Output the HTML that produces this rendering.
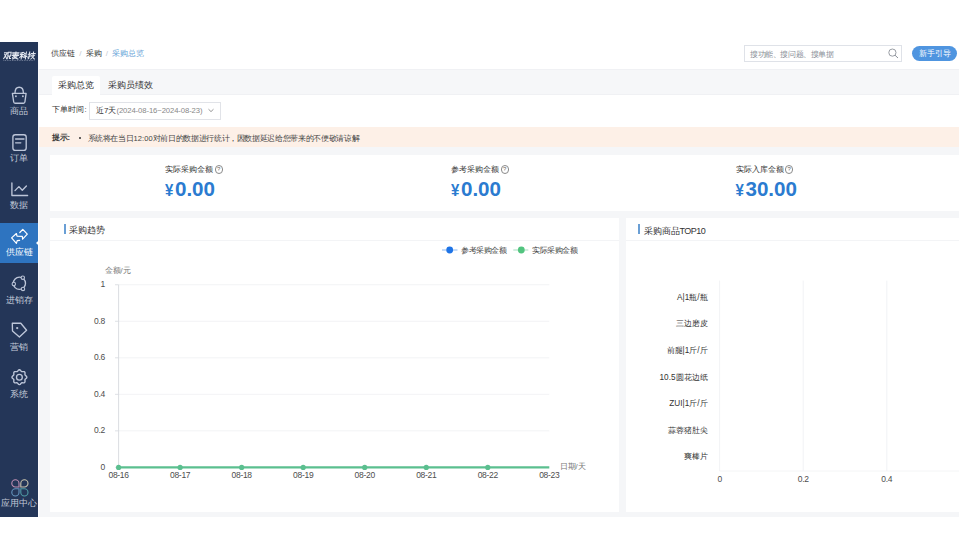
<!DOCTYPE html>
<html><head><meta charset="utf-8">
<style>
*{box-sizing:border-box;margin:0;padding:0}
html,body{width:959px;height:559px;overflow:hidden;background:#fff;font-family:"Liberation Sans",sans-serif;color:#333}
.a{position:absolute;white-space:nowrap}
.app{position:absolute;left:0;top:42px;width:959px;height:475px;background:#f5f6f8}
.side{position:absolute;left:0;top:42px;width:38px;height:475px;background:#243658}
.sl{position:absolute;left:0;width:38px;text-align:center;font-size:9px;line-height:10px;color:#c3cad8;white-space:nowrap}
.act{position:absolute;left:0;top:223px;width:38px;height:40px;background:#2e74c0}
.white{background:#fff}
.bc{font-size:8px;line-height:10px;color:#333}
.bc .sep{color:#c4c8cf;margin:0 4.2px}
.bc .cur{color:#62a0d6}
.tabt{font-size:9px;line-height:10px;color:#333}
.lbl{font-size:7.7px;line-height:9px;color:#333}
.q{position:absolute;width:8.2px;height:8.2px;border:0.7px solid #8a8a8a;border-radius:50%;font-size:6px;line-height:7px;text-align:center;color:#666}
.val{color:#2b7bd0;font-weight:bold;font-size:20.6px;line-height:20px;margin-top:0.5px}
.val small{font-size:15px;margin-right:1.6px;display:inline-block;transform:scaleY(1.13);transform-origin:50% 80%}
.ttl{font-size:9px;line-height:10px;color:#333}
.bar{position:absolute;width:2.4px;background:#6a9fd5}
.ax{font-size:8.5px;line-height:9px;color:#4d4d4d;letter-spacing:-0.3px}
.yl{font-size:8.2px;line-height:9px;color:#333;text-align:right}
.c{font-size:1.333em;line-height:0;position:relative;top:var(--cy,0.15em);-webkit-text-stroke:0.15px currentColor}
html.cjk .c{font-size:1em;line-height:inherit;top:0;letter-spacing:var(--ls2);-webkit-text-stroke:0}
</style></head><body>
<div class="app"></div>
<!-- sidebar -->
<div class="side"></div>
<div class="a" style="left:38px;top:42px;width:1px;height:475px;background:#fbfbfd"></div>
<div class="act"></div>
<svg class="a" style="left:0;top:0" width="40" height="70" viewBox="0 0 40 70"><g transform="translate(0,55.5) skewX(-9) translate(0,-55.5)"><g transform="translate(0,52.1) scale(1,0.98) translate(0,-52.1)" fill="none" stroke="#e4e8f0" stroke-width="1.05" stroke-linecap="square"><path transform="translate(3.9,52.1)" d="M0.2,0.6 H3 L0.3,6.6 M0.6,2.2 L3.2,6.6 M3.9,0.2 H6.8 V4 H3.9 Z M4.6,4 L3.7,7 M6,4 V6.6 H7.1"/><path transform="translate(11.9,52.1)" d="M0.4,0.8 H6.6 M0.9,2.1 H6.1 M0.3,3.4 H6.7 M3.5,0 V3.4 M2.6,3.9 L0.9,5.9 M2,4.8 H5.6 L1.4,7 M3,5.6 L6.6,7"/><path transform="translate(19.9,52.1)" d="M0.4,1 L3,0.3 M0.2,2.5 H3.2 M1.8,0.5 V7 M1.8,3 L0.2,5.6 M1.8,3.2 L3,4.6 M4,1 L4.9,1.7 M4,2.9 L4.9,3.6 M3.5,5.1 L7,4.4 M6,0 V7"/><path transform="translate(27.9,52.1)" d="M0.2,2.2 H2.5 M1.3,0 V6.5 L0.7,6.9 M0.2,5.1 L2.5,3.9 M3.2,1.5 H7 M5.1,0 V3 M3.6,3.3 H6.5 L3.5,7 M4.2,4.5 L7,7"/></g></g><path d="M3.5,60.5 H34.5" stroke="#8e98ae" stroke-width="0.8" stroke-dasharray="0.8 0.9"/></svg>
<div class="sl" style="top:106px"><span class="c">商品</span></div>
<div class="sl" style="top:153px"><span class="c">订单</span></div>
<div class="sl" style="top:200px"><span class="c">数据</span></div>
<div class="sl" style="top:247px;color:#fff"><span class="c">供应链</span></div>
<div class="sl" style="top:295px"><span class="c">进销存</span></div>
<div class="sl" style="top:342px"><span class="c">营销</span></div>
<div class="sl" style="top:389px"><span class="c">系统</span></div>
<div class="sl" style="top:498px"><span class="c">应用中心</span></div>
<svg class="a" style="left:0;top:0" width="40" height="559" viewBox="0 0 40 559">
 <g fill="none" stroke="#bdc6d9" stroke-width="1.35" stroke-linejoin="round" stroke-linecap="round">
  <path d="M15,93 Q15,87.2 19.2,87.2 Q23.4,87.2 23.4,93"/>
  <path d="M12.4,93.4 H26.1 L24.9,102 Q24.7,103.2 23.6,103.2 H15 Q13.9,103.2 13.7,102 Z"/>
  <rect x="12.9" y="134.7" width="13.3" height="15.6" rx="2.4"/>
  <path d="M15.6,139 H24 M15.6,142.8 H20.8"/>
  <path d="M11.9,183 V195.5 H27.6"/>
  <path d="M15,190.6 L18.9,186.6 L22.3,190.3 L26.4,186"/>
  <circle cx="19.4" cy="283.3" r="6.1"/>
  <path d="M12.3,323.2 H20.8 L26.6,330.2 L19.4,337 L12.5,331.1 Z"/>
  <path d="M19.40,369.75 L20.11,369.99 L20.72,370.58 L21.22,371.21 L21.72,371.61 L22.35,371.68 L23.15,371.59 L24.00,371.60 L24.67,371.93 L25.00,372.60 L25.01,373.45 L24.92,374.25 L24.99,374.88 L25.39,375.38 L26.02,375.88 L26.61,376.49 L26.85,377.20 L26.61,377.91 L26.02,378.52 L25.39,379.02 L24.99,379.52 L24.92,380.15 L25.01,380.95 L25.00,381.80 L24.67,382.47 L24.00,382.80 L23.15,382.81 L22.35,382.72 L21.72,382.79 L21.22,383.19 L20.72,383.82 L20.11,384.41 L19.40,384.65 L18.69,384.41 L18.08,383.82 L17.58,383.19 L17.08,382.79 L16.45,382.72 L15.65,382.81 L14.80,382.80 L14.13,382.47 L13.80,381.80 L13.79,380.95 L13.88,380.15 L13.81,379.52 L13.41,379.02 L12.78,378.52 L12.19,377.91 L11.95,377.20 L12.19,376.49 L12.78,375.88 L13.41,375.38 L13.81,374.88 L13.88,374.25 L13.79,373.45 L13.80,372.60 L14.13,371.93 L14.80,371.60 L15.65,371.59 L16.45,371.68 L17.08,371.61 L17.58,371.21 L18.08,370.58 L18.69,369.99Z"/>
  <circle cx="19.4" cy="377.2" r="2.9"/>
 </g>
 <g fill="#b9c2d6"><circle cx="15.9" cy="96.3" r="0.95"/><circle cx="22.9" cy="96.3" r="0.95"/><circle cx="17.2" cy="328.1" r="1.15"/></g>
 <g fill="#243658" stroke="#b9c2d6" stroke-width="1.1"><circle cx="22.8" cy="277.7" r="1.7"/><circle cx="13.8" cy="284" r="1.7"/><circle cx="23" cy="288.9" r="1.7"/></g>
 <path d="M19.8,232.5 L22.8,229.4 L27.3,234.2 L22.6,239.2 L22.3,236.3 L17,236.2 L16.4,233.5 L11.6,237.9 L16.4,243.3 L17.2,240.6 L19.6,240.3" fill="none" stroke="#fff" stroke-width="1.2" stroke-linejoin="round" stroke-linecap="round"/>
 <path d="M36,243 L38.6,240.5 V245.5 Z" fill="#fff"/>
 <g fill="none" stroke-width="1.1">
  <path d="M19,487 H15.4 A3.6,3.6 0 1 1 19,483.4 Z" stroke="#bf8fb2"/><path d="M20.8,487 V483.4 A3.6,3.6 0 1 1 24.4,487 Z" stroke="#c9c4ae"/><path d="M19,488.8 V492.4 A3.6,3.6 0 1 1 15.4,488.8 Z" stroke="#6494bd"/><path d="M20.8,488.8 H24.4 A3.6,3.6 0 1 1 20.8,492.4 Z" stroke="#4f9ba5"/>
 </g>
</svg>
<!-- header -->
<div class="a white" style="left:39px;top:42px;width:920px;height:27px"></div>
<div class="a bc" style="left:51px;top:49px"><span class="c">供应链</span><span class="sep">/</span><span class="c">采购</span><span class="sep">/</span><span class="cur"><span class="c">采购总览</span></span></div>
<div class="a" style="left:744px;top:45px;width:158px;height:17px;border:1px solid #dfe2e8;background:#fff"></div>
<div class="a" style="left:750px;top:49.8px;font-size:7.9px;letter-spacing:-0.4px;line-height:10px;color:#8a8f98"><span class="c">搜功能、搜问题、搜单据</span></div>
<svg class="a" style="left:886px;top:47px" width="14" height="13" viewBox="0 0 14 13"><circle cx="6.4" cy="5.6" r="3.6" fill="none" stroke="#8d929a" stroke-width="0.9"/><path d="M9,8.2 L12,11" stroke="#8d929a" stroke-width="1"/></svg>
<div class="a" style="left:912px;top:46px;width:45px;height:15px;border-radius:8px;background:#4f95e0;color:#fff;font-size:7.5px;line-height:15px;text-align:center"><span class="c">新手引导</span></div>
<!-- tabs -->
<div class="a" style="left:39px;top:69px;width:920px;height:26px;background:#f6f7f9;border-top:1px solid #f0f1f4;border-bottom:1.5px solid #f0f1f4"></div>
<div class="a white" style="left:52px;top:76px;width:48px;height:19px;border-radius:2px 2px 0 0"></div>
<div class="a tabt" style="left:58px;top:80px"><span class="c">采购总览</span></div>
<div class="a tabt" style="left:107.5px;top:80px"><span class="c">采购员绩效</span></div>
<!-- filter -->
<div class="a white" style="left:39px;top:95px;width:920px;height:32px"></div>
<div class="a" style="left:51.5px;top:105px;font-size:7.5px;line-height:10px;color:#333"><span class="c">下单时间</span><span style="margin-left:1px">:</span></div>
<div class="a" style="left:89px;top:102px;width:132px;height:18px;border:1px solid #e1e3e8;background:#fff"></div>
<div class="a" style="left:96px;top:106px;font-size:8px;line-height:10px;color:#333"><span class="c">近</span>7<span class="c">天</span><span style="color:#888;font-size:7.7px;letter-spacing:-0.1px">(2024-08-16~2024-08-23)</span></div>
<svg class="a" style="left:207px;top:108px" width="8" height="5" viewBox="0 0 8 5"><path d="M1.5,1.2 L4,3.6 L6.5,1.2" fill="none" stroke="#888" stroke-width="0.9"/></svg>
<!-- notice -->
<div class="a" style="left:39px;top:127px;width:920px;height:20px;background:#fdf0e7"></div>
<div class="a" style="left:51.5px;top:132.5px;font-size:7.5px;line-height:10px;color:#333;font-weight:bold;margin-top:0.8px"><span class="c">提示</span>:</div>
<div class="a" style="left:78.6px;top:137px;width:2.4px;height:2.4px;border-radius:50%;background:#333"></div>
<div class="a" style="--cy:0.05em;left:87.5px;top:134.3px;font-size:7.5px;letter-spacing:0.1px;--ls2:-0.35px;line-height:10px;color:#444"><span class="c">系统将在当日</span>12:00<span class="c">对前日的数据进行统计，因数据延迟给您带来的不便敬请谅解</span></div>
<!-- stats -->
<div class="a white" style="left:50px;top:154.5px;width:909px;height:56.5px"></div>
<div class="a lbl" style="left:165px;top:165px"><span class="c">实际采购金额</span></div>
<div class="q" style="left:214.5px;top:165.4px">?</div>
<div class="a val" style="left:165px;top:178px"><small>¥</small>0.00</div>
<div class="a lbl" style="left:451px;top:165px"><span class="c">参考采购金额</span></div>
<div class="q" style="left:500.5px;top:165.4px">?</div>
<div class="a val" style="left:451px;top:178px"><small>¥</small>0.00</div>
<div class="a lbl" style="left:735.5px;top:165px"><span class="c">实际入库金额</span></div>
<div class="q" style="left:785px;top:165.4px">?</div>
<div class="a val" style="left:735.5px;top:178px"><small>¥</small>30.00</div>
<!-- left chart card -->
<div class="a white" style="left:50px;top:217.5px;width:569px;height:294px"></div>
<div class="bar" style="left:64px;top:224.3px;height:10px"></div>
<div class="a ttl" style="left:69px;top:225px"><span class="c">采购趋势</span></div>
<div class="a" style="left:50px;top:239.5px;width:569px;height:1px;background:#f3f4f6"></div>
<!-- right chart card -->
<div class="a white" style="left:626px;top:217.5px;width:333px;height:294px"></div>
<div class="bar" style="left:638px;top:224px;height:10.3px"></div>
<div class="a ttl" style="left:643.5px;top:225.5px"><span class="c">采购商品</span><span style="letter-spacing:-0.5px">TOP10</span></div>
<div class="a" style="left:626px;top:239.5px;width:333px;height:1px;background:#f3f4f6"></div>
<svg class="a" style="left:0;top:0" width="959" height="559" viewBox="0 0 959 559">
<path d="M118.6,284.75 H549.3" stroke="#eff0f3" stroke-width="0.8" fill="none"/>
<path d="M118.6,321.28 H549.3" stroke="#eff0f3" stroke-width="0.8" fill="none"/>
<path d="M118.6,357.81 H549.3" stroke="#eff0f3" stroke-width="0.8" fill="none"/>
<path d="M118.6,394.34 H549.3" stroke="#eff0f3" stroke-width="0.8" fill="none"/>
<path d="M118.6,430.87 H549.3" stroke="#eff0f3" stroke-width="0.8" fill="none"/>
<path d="M115,284.75 H118.6" stroke="#d6d9de" stroke-width="0.8" fill="none"/>
<path d="M115,321.28 H118.6" stroke="#d6d9de" stroke-width="0.8" fill="none"/>
<path d="M115,357.81 H118.6" stroke="#d6d9de" stroke-width="0.8" fill="none"/>
<path d="M115,394.34 H118.6" stroke="#d6d9de" stroke-width="0.8" fill="none"/>
<path d="M115,430.87 H118.6" stroke="#d6d9de" stroke-width="0.8" fill="none"/>
<path d="M115,467.40 H118.6" stroke="#d6d9de" stroke-width="0.8" fill="none"/>
<path d="M118.6,284.75 V467.4" stroke="#d6d9de" stroke-width="0.9" fill="none"/>
<path d="M118.6,467.4 H549.3" stroke="#5bbf8f" stroke-width="2.4" fill="none"/>
<circle cx="118.60" cy="467.4" r="2.6" fill="#5bbf8f"/>
<circle cx="180.13" cy="467.4" r="2.6" fill="#5bbf8f"/>
<circle cx="241.66" cy="467.4" r="2.6" fill="#5bbf8f"/>
<circle cx="303.19" cy="467.4" r="2.6" fill="#5bbf8f"/>
<circle cx="364.72" cy="467.4" r="2.6" fill="#5bbf8f"/>
<circle cx="426.25" cy="467.4" r="2.6" fill="#5bbf8f"/>
<circle cx="487.78" cy="467.4" r="2.6" fill="#5bbf8f"/>
<path d="M442,250 H457.5" stroke="#5a9aea" stroke-width="0.7"/><circle cx="449.7" cy="250" r="3.4" fill="#1f74e6"/>
<path d="M513.3,250 H528.3" stroke="#7ccfa0" stroke-width="0.7"/><circle cx="521.3" cy="250" r="3.4" fill="#52c47f"/>
<path d="M719.6,280.6 V471" stroke="#eeeff2" stroke-width="0.8" fill="none"/>
<path d="M803.2,280.6 V471" stroke="#eeeff2" stroke-width="0.8" fill="none"/>
<path d="M886.8,280.6 V471" stroke="#eeeff2" stroke-width="0.8" fill="none"/>
<path d="M970.4,280.6 V471" stroke="#eeeff2" stroke-width="0.8" fill="none"/>
<path d="M719.6,471 H959" stroke="#f1f2f4" stroke-width="0.8" fill="none"/>
</svg>
<div class="a ax" style="left:104.5px;top:265.5px;font-size:7.7px;color:#777;letter-spacing:0.6px;--ls2:0px"><span class="c">金额</span>/<span class="c">元</span></div>
<div class="a ax" style="left:60px;width:45px;text-align:right;top:280.25px">1</div>
<div class="a ax" style="left:60px;width:45px;text-align:right;top:316.78px">0.8</div>
<div class="a ax" style="left:60px;width:45px;text-align:right;top:353.31px">0.6</div>
<div class="a ax" style="left:60px;width:45px;text-align:right;top:389.84px">0.4</div>
<div class="a ax" style="left:60px;width:45px;text-align:right;top:426.37px">0.2</div>
<div class="a ax" style="left:60px;width:45px;text-align:right;top:462.90px">0</div>
<div class="a ax" style="left:98.60px;width:40px;text-align:center;top:470.8px">08-16</div>
<div class="a ax" style="left:160.13px;width:40px;text-align:center;top:470.8px">08-17</div>
<div class="a ax" style="left:221.66px;width:40px;text-align:center;top:470.8px">08-18</div>
<div class="a ax" style="left:283.19px;width:40px;text-align:center;top:470.8px">08-19</div>
<div class="a ax" style="left:344.72px;width:40px;text-align:center;top:470.8px">08-20</div>
<div class="a ax" style="left:406.25px;width:40px;text-align:center;top:470.8px">08-21</div>
<div class="a ax" style="left:467.78px;width:40px;text-align:center;top:470.8px">08-22</div>
<div class="a ax" style="left:529.31px;width:40px;text-align:center;top:470.8px">08-23</div>
<div class="a ax" style="left:559.5px;top:461.8px;font-size:7.7px;color:#777;letter-spacing:0.5px;--ls2:0px"><span class="c">日期</span>/<span class="c">天</span></div>
<div class="a lbl" style="left:461px;top:245.5px;color:#444;letter-spacing:-0.15px;--ls2:-0.4px"><span class="c">参考采购金额</span></div>
<div class="a lbl" style="left:532px;top:245.5px;color:#444;letter-spacing:-0.1px;--ls2:-0.4px"><span class="c">实际采购金额</span></div>
<div class="a yl" style="left:627px;width:80.5px;top:293.00px">A|1<span class="c">瓶</span>/<span class="c">瓶</span></div>
<div class="a yl" style="left:627px;width:80.5px;top:319.30px"><span class="c">三边磨皮</span></div>
<div class="a yl" style="left:627px;width:80.5px;top:345.60px"><span class="c">前腿</span>|1<span class="c">斤</span>/<span class="c">斤</span></div>
<div class="a yl" style="left:627px;width:80.5px;top:372.50px">10.5<span class="c">圆花边纸</span></div>
<div class="a yl" style="left:627px;width:80.5px;top:399.00px">ZUI|1<span class="c">斤</span>/<span class="c">斤</span></div>
<div class="a yl" style="left:627px;width:80.5px;top:425.50px"><span class="c">蒜蓉猪肚尖</span></div>
<div class="a yl" style="left:627px;width:80.5px;top:451.60px"><span class="c">爽棒片</span></div>
<div class="a ax" style="left:699.60px;width:40px;text-align:center;top:474.5px">0</div>
<div class="a ax" style="left:783.20px;width:40px;text-align:center;top:474.5px">0.2</div>
<div class="a ax" style="left:866.80px;width:40px;text-align:center;top:474.5px">0.4</div>
<script>(function(){var s=document.createElement('span');s.style.cssText='position:absolute;left:-9999px;top:0;font-size:100px;font-family:"Liberation Sans",sans-serif;white-space:nowrap;letter-spacing:0';s.textContent='采购总览';document.body.appendChild(s);var w=s.getBoundingClientRect().width;document.body.removeChild(s);if(w>350){document.documentElement.className='cjk';}})();</script></body></html>
